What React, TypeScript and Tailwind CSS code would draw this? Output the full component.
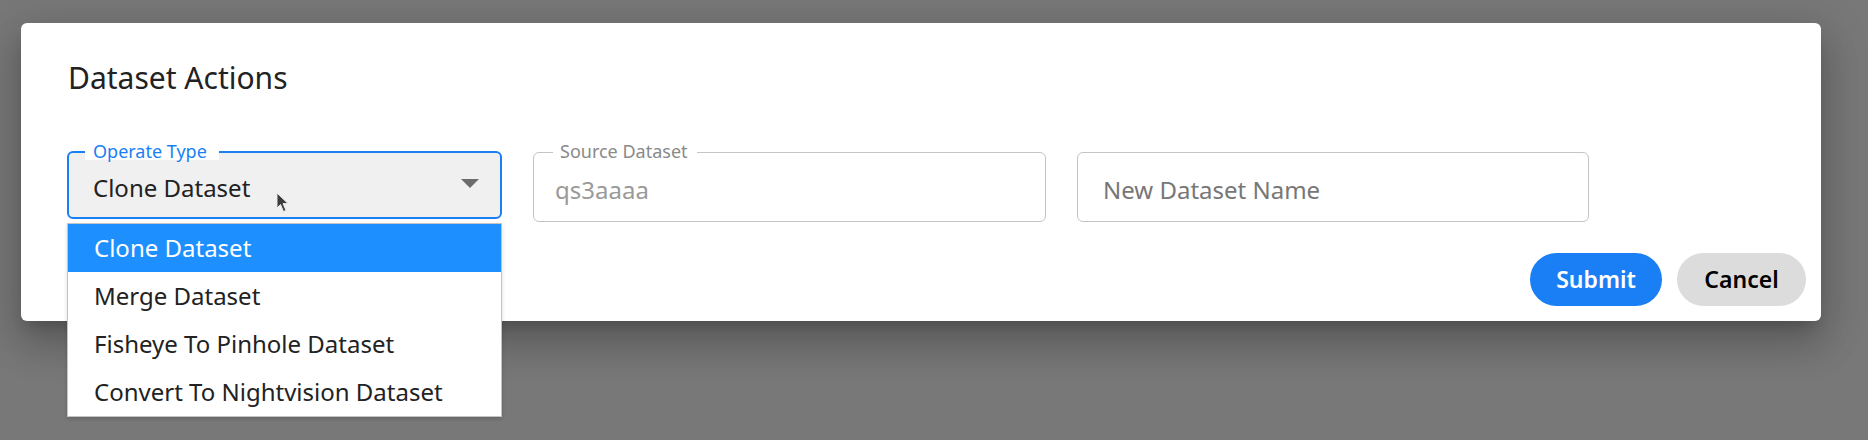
import React from "react";

const font = { fontFamily: '"Noto Sans", "Open Sans", sans-serif' };

function Cursor() {
  return (
    <svg
      className="absolute left-[209px] top-[41px]"
      width="14"
      height="21"
      viewBox="0 0 14 21"
    >
      <path
        d="M1 1 L1 16 L4.5 12.5 L7.5 19.5 L10 18.4 L7 11.6 L12 11.6 Z"
        fill="#3b3b3b"
        stroke="#e8e8e8"
        strokeWidth="1"
        strokeLinejoin="round"
      />
    </svg>
  );
}

export default function App() {
  const items = [
    "Clone Dataset",
    "Merge Dataset",
    "Fisheye To Pinhole Dataset",
    "Convert To Nightvision Dataset",
  ];
  return (
    <div
      className="w-full h-[440px] bg-[#787878] pl-[21px] pt-[23px] overflow-hidden"
      style={font}
    >
      <div className="w-[1800px] h-[298px] bg-white rounded-[6px] pt-[35px] pb-[15px] flex flex-col shadow-[0_11px_15px_-7px_rgba(0,0,0,0.2),0_24px_38px_3px_rgba(0,0,0,0.14),0_9px_46px_8px_rgba(0,0,0,0.12)]">
        <div className="pl-[47px] h-[40px] text-[30px] leading-[40px] text-[#222]">
          Dataset Actions
        </div>
        <div className="pl-[46px] mt-[53px] flex items-start gap-[31px]">
          {/* Operate Type select */}
          <div className="relative w-[435px] h-[68px]">
            <div className="h-full w-full border-2 border-[#1a7ff5] rounded-[6px] bg-[#f0f0f0] flex items-center pl-[24px] pr-[21px] pt-[5px]">
              <span className="flex-1 text-[24px] text-[#222]">Clone Dataset</span>
              <svg width="18" height="9" viewBox="0 0 18 9" className="-mt-[8px]">
                <path d="M0 0 L18 0 L9 9 Z" fill="#6b6b6b" />
              </svg>
            </div>
            <span className="absolute left-[18px] top-[-9px] bg-white pl-[8px] pr-[12px] text-[18px] leading-[18px] text-[#1a7ff5]">
              Operate Type
            </span>
            <Cursor />
            <div className="absolute left-0 top-[72px] w-[435px] bg-white border border-[#c4c4c4] shadow-[0_2px_4px_rgba(0,0,0,0.15)] z-10">
              {items.map((it, i) => (
                <div
                  key={it}
                  className={
                    "h-[48px] flex items-center pl-[26px] text-[24px] " +
                    (i === 0 ? "bg-[#1e8fff] text-white" : "text-[#222]")
                  }
                >
                  {it}
                </div>
              ))}
            </div>
          </div>
          {/* Source Dataset */}
          <div className="relative w-[513px] h-[70px] mt-[1px]">
            <div className="h-full w-full border border-[#c4c4c4] rounded-[6px] flex items-center pl-[21px] pt-[6px]">
              <span className="text-[24px] text-[#9a9a9a]">qs3aaaa</span>
            </div>
            <span className="absolute left-[20px] top-[-10px] bg-white pl-[7px] pr-[9px] text-[18px] leading-[18px] text-[#8a8a8a]">
              Source Dataset
            </span>
          </div>
          {/* New Dataset Name */}
          <div className="w-[512px] h-[70px] mt-[1px] border border-[#c4c4c4] rounded-[6px] flex items-center pl-[25px] pt-[6px]">
            <span className="text-[24px] text-[#777]">New Dataset Name</span>
          </div>
        </div>
        <div className="mt-auto flex justify-end gap-[15px] pr-[15px]">
          <button className="w-[132px] h-[53px] rounded-full bg-[#1a7ff5] text-white text-[23px] font-semibold">
            Submit
          </button>
          <button className="w-[129px] h-[53px] rounded-full bg-[#dcdcdc] text-black text-[23px] font-semibold">
            Cancel
          </button>
        </div>
      </div>
    </div>
  );
}
